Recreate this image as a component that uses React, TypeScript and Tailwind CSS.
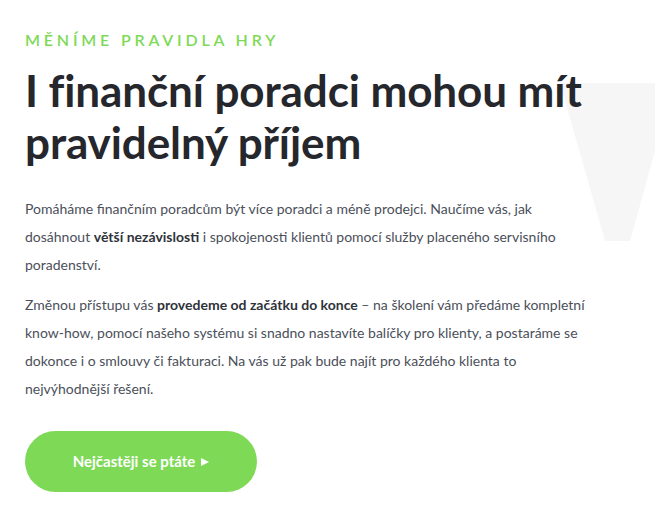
import React from "react";

const Backdrop: React.FC = () => (
  <svg
    className="absolute right-0 top-[83px] w-[95px] h-[158px]"
    viewBox="0 0 95 158"
    aria-hidden="true"
  >
    <polygon points="0,0 95,0 95,68 70,158 45,158" fill="#f6f6f7" />
  </svg>
);

const App: React.FC = () => {
  return (
    <div
      className="relative w-full h-[517px] overflow-hidden bg-white"
      style={{ fontFamily: "Lato, 'Noto Sans', sans-serif" }}
    >
      <Backdrop />

      <div className="relative pl-[25px] pt-[30px]">
        <p className="text-[16px] leading-[20px] font-semibold uppercase tracking-[3.8px] text-[#7ed957]">
          Měníme pravidla hry
        </p>

        <h1 className="mt-[14px] text-[44px] leading-[52px] font-bold text-[#25272c] tracking-[-0.1px]">
          I finanční poradci mohou mít
          <br />
          pravidelný příjem
        </h1>

        {/* line breaks kept as in the design */}
        <div className="mt-[27px] whitespace-nowrap text-[14px] leading-[28px] text-[#4b4f5a]">
          <p>
            Pomáháme finančním poradcům být více poradci a méně prodejci. Naučíme vás, jak
            <br />
            dosáhnout <strong className="font-bold text-[#2f323a]">větší nezávislosti</strong> i
            spokojenosti klientů pomocí služby placeného servisního
            <br />
            poradenství.
          </p>
          <p className="mt-[12px]">
            Změnou přístupu vás{" "}
            <strong className="font-bold text-[#2f323a]">provedeme od začátku do konce</strong> – na
            školení vám předáme kompletní
            <br />
            know-how, pomocí našeho systému si snadno nastavíte balíčky pro klienty, a postaráme se
            <br />
            dokonce i o smlouvy či fakturaci. Na vás už pak bude najít pro každého klienta to
            <br />
            nejvýhodnější řešení.
          </p>
        </div>

        <button
          type="button"
          className="mt-[28px] flex items-center justify-center gap-[6px] w-[232px] h-[61px] rounded-full bg-[#7ed957] text-white text-[15px] font-bold"
        >
          Nejčastěji se ptáte
          <svg className="w-[8px] h-[8px]" viewBox="0 0 8 8" aria-hidden="true">
            <polygon points="0,0 8,4 0,8" fill="currentColor" />
          </svg>
        </button>
      </div>
    </div>
  );
};

export default App;
